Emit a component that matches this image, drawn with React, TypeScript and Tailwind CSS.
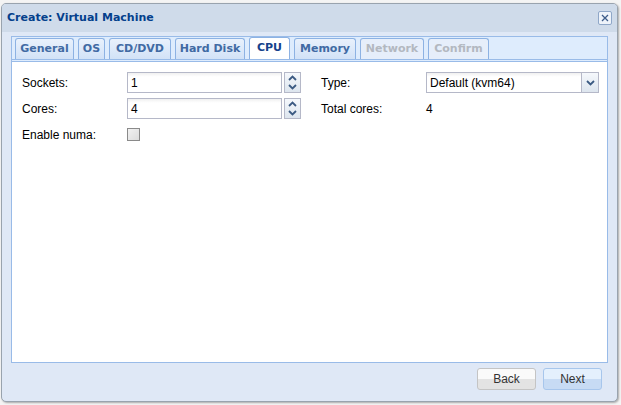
import React from "react";

const tabs = [
  { t: "General", w: 59 },
  { t: "OS", w: 27 },
  { t: "CD/DVD", w: 62 },
  { t: "Hard Disk", w: 70 },
  { t: "CPU", w: 41, active: true },
  { t: "Memory", w: 62 },
  { t: "Network", w: 64, disabled: true },
  { t: "Confirm", w: 61, disabled: true },
];

function Spinner() {
  return (
    <div className="w-[17px] h-[21px] ml-[2px] border border-[#b5b8c8] bg-gradient-to-b from-[#f5f8fc] to-[#dde5ee] flex flex-col">
      <div className="flex-1 flex items-center justify-center">
        <svg width="9" height="6" viewBox="0 0 9 6"><path d="M1 5 L4.5 1.5 L8 5" stroke="#3b5a82" strokeWidth="1.8" fill="none" /></svg>
      </div>
      <div className="flex-1 flex items-center justify-center">
        <svg width="9" height="6" viewBox="0 0 9 6"><path d="M1 1 L4.5 4.5 L8 1" stroke="#3b5a82" strokeWidth="1.8" fill="none" /></svg>
      </div>
    </div>
  );
}

function Field({ v }: { v: string }) {
  return (
    <div className="flex">
      <div className="w-[155px] h-[21px] border border-[#b5b8c8] bg-white bg-gradient-to-b from-[#f0f0f0] to-white to-[20%] px-[3px] flex items-center text-[12px] text-black">{v}</div>
      <Spinner />
    </div>
  );
}

export default function App() {
  return (
    <div className="w-[621px] h-[405px] bg-[#f4f4f4] relative" style={{ fontFamily: '"Liberation Sans", Arial, sans-serif' }}>
      <div className="absolute left-[1px] top-[3px] w-[617px] h-[399px] border border-[#99a3ae] rounded-[5px] bg-[#dfe8f6] flex flex-col overflow-hidden shadow-[1px_1px_2px_rgba(0,0,0,0.3)]">
        <div className="h-[28px] flex items-center justify-between pl-[5px] pr-[5px] bg-[#cfdbea]">
          <span className="text-[12px] font-bold text-[#04408c]" style={{ fontFamily: '"DejaVu Sans", sans-serif', fontSize: 11 }}>Create: Virtual Machine</span>
          <div className="w-[14px] h-[14px] border border-[#8fa7c8] rounded-[2px] bg-[#eef3fa] flex items-center justify-center">
            <svg width="8" height="8" viewBox="0 0 8 8"><path d="M1 1 L7 7 M7 1 L1 7" stroke="#3d5c8a" strokeWidth="1.3" /></svg>
          </div>
        </div>
        <div className="mx-[9px] mt-[4px] h-[327px] border border-[#99bbe8] flex flex-col bg-white">
          <div className="h-[23px] bg-[#deecfd] flex items-end gap-[4px] pl-[3px] border-b border-[#99bbe8]">
            {tabs.map((t) => (
              <div
                key={t.t}
                style={{ width: t.w, fontFamily: '"DejaVu Sans", sans-serif' }}
                className={`h-[21px] border border-b-0 border-[#8db2e3] rounded-t-[3px] flex items-center justify-center text-[11px] font-bold ${t.active ? "bg-white text-[#15428b] h-[22px]" : t.disabled ? "bg-[#e6eefa] text-[#b3b8c0]" : "bg-gradient-to-b from-[#e9f1fc] to-[#d2e2f7] text-[#416aa3]"}`}
              >
                {t.t}
              </div>
            ))}
          </div>
          <div className="h-[2px] bg-[#deecfd] border-b border-[#99bbe8]" />
          <div className="flex pt-[10px] pl-[10px] text-[12px] text-black">
            <div className="w-[298px] flex flex-col gap-[5px]">
              <div className="flex items-center"><span className="w-[105px]">Sockets:</span><Field v="1" /></div>
              <div className="flex items-center"><span className="w-[105px]">Cores:</span><Field v="4" /></div>
              <div className="flex items-center h-[21px]"><span className="w-[105px]">Enable numa:</span>
                <div className="w-[13px] h-[13px] border border-[#8a8a8a] bg-gradient-to-br from-[#f2f2f2] to-[#dcdcdc]" />
              </div>
            </div>
            <div className="flex flex-col gap-[5px] ml-[1px]">
              <div className="flex items-center"><span className="w-[105px]">Type:</span>
                <div className="flex w-[173px] h-[21px] border border-[#b5b8c8]">
                  <div className="flex-1 px-[3px] flex items-center bg-gradient-to-b from-[#f0f0f0] to-white to-[20%]">Default (kvm64)</div>
                  <div className="w-[17px] border-l border-[#b5b8c8] bg-gradient-to-b from-[#f5f8fc] to-[#dde5ee] flex items-center justify-center">
                    <svg width="9" height="6" viewBox="0 0 9 6"><path d="M1 1 L4.5 4.5 L8 1" stroke="#3b5a82" strokeWidth="1.8" fill="none" /></svg>
                  </div>
                </div>
              </div>
              <div className="flex items-center h-[21px]"><span className="w-[105px]">Total cores:</span><span>4</span></div>
            </div>
          </div>
        </div>
        <div className="flex justify-end gap-[7px] pr-[15px] pt-[5px]">
          <button className="w-[59px] h-[22px] border border-[#c4c4c4] rounded-[3px] bg-gradient-to-b from-[#fafafa] from-50% to-[#e3e3e3] to-50% text-[12px] text-[#333]">Back</button>
          <button className="w-[59px] h-[22px] border border-[#a7c6ec] rounded-[3px] bg-gradient-to-b from-[#e4f0fd] from-50% to-[#c7dbf4] to-50% text-[12px] text-[#333]">Next</button>
        </div>
      </div>
    </div>
  );
}
